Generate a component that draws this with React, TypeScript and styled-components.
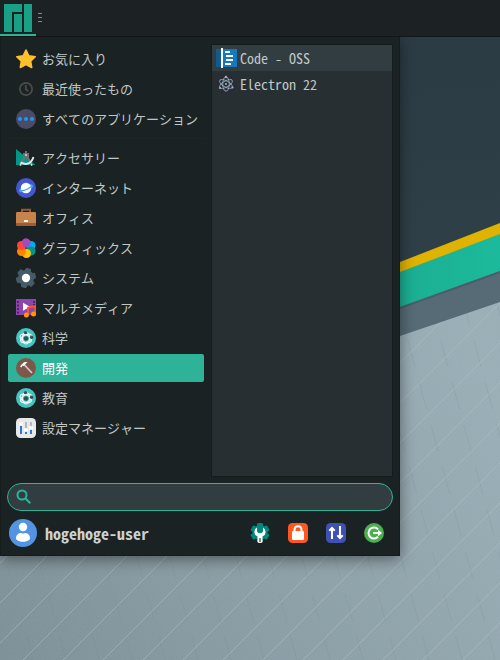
import React, { useState } from "react";
import styled, { createGlobalStyle } from "styled-components";

const GlobalStyle = createGlobalStyle`
  * { box-sizing: border-box; }
  html, body, #root { height: 100%; }
  body {
    margin: 0;
    overflow: hidden;
    color: #c0c8c5;
    font: 13px/20px "Noto Sans Mono CJK JP", "Liberation Mono", "Noto Sans CJK JP", monospace;
  }
  button, input { font: inherit; color: inherit; }
`;

const Desktop = styled.div`
  position: relative;
  min-height: 100%;
  display: flex;
  flex-direction: column;
  align-items: flex-start;
`;

const WallpaperArt = styled.svg`
  position: absolute;
  inset: 0;
  width: 100%;
  height: 100%;
`;

const Taskbar = styled.header`
  position: relative;
  z-index: 2;
  align-self: stretch;
  height: 37px;
  display: flex;
  align-items: flex-start;
  gap: 2px;
  background: #1c2224;
  border-bottom: 1px solid #111617;
`;

const StartButton = styled.button`
  width: 36px;
  height: 36px;
  padding: 4px 4px 2px;
  border: 0;
  border-bottom: 2px solid #2eb398;
  background: transparent;
  svg { display: block; }
`;

const Handle = styled.div`
  height: 35px;
  display: flex;
  flex-direction: column;
  justify-content: center;
  gap: 3px;
  span { width: 4px; height: 1px; background: #838a8b; }
`;

const Menu = styled.main`
  position: relative;
  width: 400px;
  max-width: 100%;
  display: flex;
  flex-direction: column;
  padding: 8px 6px 8px 7px;
  background: #1b2224;
  border: 1px solid #161b1c;
  border-top: 0;
  box-shadow: 0 3px 14px rgba(0, 0, 0, 0.45);
`;

const Columns = styled.div`
  display: flex;
  gap: 7px;
`;

const Categories = styled.nav`
  flex: 1;
  display: flex;
  flex-direction: column;
  gap: 2px;
`;

const CategoryButton = styled.button<{ $active: boolean }>`
  height: 28px;
  display: flex;
  align-items: center;
  gap: 6px;
  padding: 0 4px 0 8px;
  border: 0;
  border-radius: 2px;
  background: ${(p) => (p.$active ? "#2eb398" : "transparent")};
  color: ${(p) => (p.$active ? "#ffffff" : "inherit")};
  white-space: nowrap;
  text-align: left;
`;

const Separator = styled.hr`
  width: 100%;
  height: 1px;
  margin: 3px 0;
  border: 0;
  background: #1e2527;
`;

const AppList = styled.section`
  flex: 0 0 182px;
  height: 433px;
  margin-top: -1px;
  border: 1px solid #151a1b;
  background: #282f32;
`;

const AppButton = styled.button<{ $active: boolean }>`
  width: 100%;
  height: 26px;
  display: flex;
  align-items: center;
  gap: 3px;
  padding: 0 4px;
  border: 0;
  background: ${(p) => (p.$active ? "#323d42" : "transparent")};
  font-size: 14px;
  text-align: left;
`;

const SearchBox = styled.label`
  height: 28px;
  margin: 6px 0 0 -1px;
  display: flex;
  align-items: center;
  gap: 8px;
  padding: 0 8px;
  border: 1px solid #2eb398;
  border-radius: 14px;
  background: #323d42;
  input {
    flex: 1;
    min-width: 0;
    border: 0;
    outline: 0;
    background: transparent;
  }
`;

const Footer = styled.footer`
  display: flex;
  align-items: center;
  gap: 18px;
  margin-top: 8px;
  padding: 0 9px 0 1px;
`;

const UserButton = styled.button`
  flex: 1;
  display: flex;
  align-items: center;
  gap: 8px;
  padding: 0;
  border: 0;
  background: transparent;
  color: #cbd2d0;
  font-size: 16px;
  font-weight: 700;
`;

const ActionButton = styled.button`
  width: 20px;
  height: 20px;
  padding: 0;
  border: 0;
  background: transparent;
  svg { display: block; }
`;

type Children = { children: React.ReactNode };
const Icon = ({ children }: Children) => (
  <svg width="20" height="20" viewBox="0 0 20 20" aria-hidden="true">{children}</svg>
);

const Wallpaper = () => (
  <WallpaperArt viewBox="0 0 500 660" preserveAspectRatio="xMidYMid slice" aria-hidden="true">
    <defs>
      <linearGradient id="stone" x1="0" y1="660" x2="500" y2="400" gradientUnits="userSpaceOnUse">
        <stop offset="0" stopColor="#7e9097" />
        <stop offset="1" stopColor="#9cb0b8" />
      </linearGradient>
      <linearGradient id="teal" x1="400" x2="500" y1="0" y2="0" gradientUnits="userSpaceOnUse">
        <stop offset="0" stopColor="#1bae92" />
        <stop offset="1" stopColor="#1cba9c" />
      </linearGradient>
      <linearGradient id="shade" x1="0" y1="0" x2="0" y2="1">
        <stop offset="0" stopColor="#2b3b44" />
        <stop offset="1" stopColor="#32424b" />
      </linearGradient>
      <filter id="grain">
        <feTurbulence type="fractalNoise" baseFrequency="0.8" numOctaves="2" />
        <feColorMatrix values="0 0 0 0 0.3  0 0 0 0 0.4  0 0 0 0 0.44  0.7 0 0 0 -0.2" />
      </filter>
    </defs>
    <rect width="500" height="660" fill="url(#stone)" />
    <rect width="500" height="660" filter="url(#grain)" opacity="0.5" />
    {Array.from({ length: 22 }, (_, i) => (
      <path key={i} d={`M${i * 33 - 180} 0 l180 660`} stroke="#768991" strokeOpacity="0.2" strokeDasharray="28 16" />
    ))}
    {Array.from({ length: 28 }, (_, i) => (
      <path key={i} d={`M${i * 40 + 43} 0 l-660 660`} stroke="#b6c5c9" strokeOpacity="0.45" />
    ))}
    <path d="M0 0H500V302L400 336L0 472Z" fill="#566b76" />
    <path d="M0 0H500V271L400 307L0 451Z" fill="url(#teal)" />
    <path d="M0 0H500V234L400 272L0 424Z" fill="#dfb300" />
    <path d="M0 0H500V223L400 262L0 418Z" fill="url(#shade)" />
    <path d="M400 308L500 272" stroke="#354650" strokeOpacity="0.35" strokeWidth="2" />
  </WallpaperArt>
);

const Star = () => <Icon><path d="M10 1l2.8 5.8 6.4.9-4.6 4.5 1.1 6.3-5.7-3-5.7 3 1.1-6.3L.8 7.7l6.4-.9z" fill="#ffc02e" stroke="#ffc02e" strokeWidth="1.6" strokeLinejoin="round" /></Icon>;
const Clock = () => <Icon><g fill="none" stroke="#4a4a4a" strokeWidth="1.8"><circle cx="10" cy="10" r="6.1" /><path d="M9.8 6v4.3l2.5 2" /></g></Icon>;
const Dots = () => <Icon><circle cx="10" cy="10" r="10" fill="#494b67" /><g fill="#2196f3"><circle cx="4" cy="10" r="2" /><circle cx="10" cy="10" r="2" /><circle cx="16" cy="10" r="2" /></g></Icon>;
const Compass = () => (
  <Icon>
    <path d="M0 1L19.5 17H0z" fill="#009688" />
    <path d="M9 8L4.5 17.5M11 8l5 9.5" stroke="#737373" strokeWidth="1.8" fill="none" />
    <path d="M4.5 14.5Q14 19 17.5 9" stroke="#e5e9e8" strokeWidth="2" fill="none" />
    <path d="M9 3h2v2h2v4.5h-2L10 11 9 9.5H7V5h2z" fill="#707070" />
    <circle cx="10" cy="7" r="1" fill="#cfd8d6" />
    <path d="M4 17.6l1-2M16 17.6l-1-2" stroke="#d4d7d6" strokeWidth="1.4" />
  </Icon>
);
const Globe = () => (
  <Icon>
    <circle cx="10" cy="10" r="10" fill="#4457d0" />
    <ellipse cx="10" cy="10.3" rx="7.4" ry="3" transform="rotate(-23 10 10)" fill="#42a5f5" />
    <circle cx="10" cy="10" r="5.2" fill="#fff" />
    <path d="M3.5 13Q10 13 16 8" stroke="#42a5f5" strokeWidth="1.3" fill="none" />
  </Icon>
);
const Briefcase = () => <Icon><path d="M6 5V1.8h8V5" fill="none" stroke="#955a35" strokeWidth="2" /><rect y="4" width="20" height="13" rx="1.2" fill="#c7834e" /><path d="M0 15h20v2a1 1 0 0 1-1 1H1a1 1 0 0 1-1-1z" fill="#9e5c32" /><rect x="8" y="12" width="4" height="2" rx=".5" fill="#fff" /></Icon>;
const Flower = () => (
  <Icon>
    <circle cx="10" cy="5" r="4.5" fill="#ab47bc" />
    <circle cx="15" cy="7.5" r="4.5" fill="#03a9f4" />
    <circle cx="15" cy="13" r="4.5" fill="#009688" />
    <circle cx="10.5" cy="15.5" r="4.5" fill="#ffc107" />
    <circle cx="5.5" cy="13.5" r="4.5" fill="#ff8500" />
    <circle cx="5.5" cy="7.5" r="4.5" fill="#ff4438" />
    <path d="M10 10C5.5 8 5 3 8.3.8A4.5 4.5 0 0 1 14.5 5C14 8 12 9 10 10z" fill="#ab47bc" />
    <circle cx="10.2" cy="10" r="1.2" fill="#276a80" />
  </Icon>
);
const Gear = () => (
  <Icon>
    <g fill="#475b66">
      <circle cx="10" cy="10" r="8" />
      {[15, 75, 135, 195, 255, 315].map((angle) => <rect key={angle} x="7" y="0" width="6" height="6" rx="1.5" transform={`rotate(${angle} 10 10)`} />)}
    </g>
    <circle cx="10" cy="10" r="4.2" fill="#fff" />
  </Icon>
);
const Film = () => (
  <Icon>
    <path d="M0 1h20v16H0z" fill="#8e44ad" />
    <path d="M1 3h2v2H1zm0 3.5h2v2H1zM1 10h2v2H1zm0 3.5h2v2H1zM17 3h2v2h-2zm0 3h2v2h-2z" fill="#4e2861" />
    <path d="M7 4.8v8l7-4z" fill="#fff" />
    <path d="M12 17V9.5l7.2-1.4V16" fill="none" stroke="#ff5722" strokeWidth="1.8" />
    <circle cx="10.4" cy="17" r="2.5" fill="#ff9800" /><circle cx="17.5" cy="16" r="2.5" fill="#ff9800" />
  </Icon>
);
const Atom = () => (
  <Icon>
    <circle cx="10" cy="10" r="10" fill="#45c5bf" />
    <g fill="none" stroke="#edfafa" strokeWidth="1.1">
      <ellipse cx="10" cy="10.5" rx="6.2" ry="3.6" transform="rotate(28 10 10)" />
      <ellipse cx="10" cy="10.5" rx="6.2" ry="3.6" transform="rotate(-28 10 10)" />
      <ellipse cx="10" cy="10" rx="3.6" ry="6" />
    </g>
    <g fill="#3e4b53"><circle cx="10" cy="10.5" r="2.2" /><circle cx="9.5" cy="4.6" r="1.7" /><circle cx="15.6" cy="9.2" r="1.7" /></g>
  </Icon>
);
const Hammer = () => <Icon><circle cx="10" cy="10" r="10" fill="#7d574a" /><path d="M8 6.5l8 8.5" stroke="#d5c9c4" strokeWidth="1.8" /><path d="M4 8.3l4-4 3.6-.2-3 2.8-.7 1-1.3-.3-1.2 1.8z" fill="#fff" /></Icon>;
const Sliders = () => (
  <Icon>
    <rect width="20" height="20" rx="4.5" fill="#e7e8e9" />
    <path d="M5 4v12M10 4v12M15 4v12" stroke="#b4b7bc" strokeWidth="2" />
    <path d="M5 7v9M10 13v3M15 11v5" stroke="#277bd8" strokeWidth="2" />
    <g fill="#fff"><circle cx="5" cy="6" r="2.1" /><circle cx="10" cy="12" r="2.1" /><circle cx="15" cy="10" r="2.1" /></g>
  </Icon>
);

const CodeIcon = () => (
  <svg width="21" height="20" viewBox="0 0 21 20" aria-hidden="true">
    <path d="M0 1h21v18H0z" fill="#1679be" /><path d="M0 1h5v18H0z" fill="#125b91" />
    <path d="M5 0h2v20H5z" fill="#fff" />
    <path d="M9 4h5M10 8h7M10 12h7M9 16h6" stroke="#fff" strokeWidth="2" />
  </svg>
);
const ElectronIcon = () => (
  <svg width="21" height="20" viewBox="0 0 21 20" aria-hidden="true">
    <circle cx="10" cy="10" r="9.5" fill="#2b2b38" />
    <g fill="none" stroke="#90a5b2" strokeWidth="1">
      <ellipse cx="10" cy="10" rx="7.1" ry="3" transform="rotate(30 10 10)" />
      <ellipse cx="10" cy="10" rx="7.1" ry="3" transform="rotate(-30 10 10)" />
      <ellipse cx="10" cy="10" rx="3.3" ry="7.2" />
    </g>
    <g fill="#a1b4be"><circle cx="10" cy="10" r="1" /><circle cx="10" cy="3" r="1.2" /><circle cx="4" cy="14" r="1.1" /><circle cx="16.5" cy="13.5" r="1.1" /></g>
  </svg>
);

const categoryGroups = [
  [
    { name: "お気に入り", icon: Star },
    { name: "最近使ったもの", icon: Clock },
    { name: "すべてのアプリケーション", icon: Dots },
  ],
  [
    { name: "アクセサリー", icon: Compass },
    { name: "インターネット", icon: Globe },
    { name: "オフィス", icon: Briefcase },
    { name: "グラフィックス", icon: Flower },
    { name: "システム", icon: Gear },
    { name: "マルチメディア", icon: Film },
    { name: "科学", icon: Atom },
    { name: "開発", icon: Hammer },
    { name: "教育", icon: Atom },
    { name: "設定マネージャー", icon: Sliders },
  ],
];

export default function App() {
  const [category, setCategory] = useState("開発");
  const [query, setQuery] = useState("");

  const renderCategory = ({ name, icon: CategoryIcon }: { name: string; icon: React.FC }) => (
    <CategoryButton key={name} $active={category === name} onClick={() => setCategory(name)}>
      <CategoryIcon />{name}
    </CategoryButton>
  );

  return (
    <Desktop>
      <GlobalStyle />
      <Wallpaper />
      <Taskbar>
        <StartButton aria-label="メニュー">
          <svg width="28" height="28" viewBox="0 0 28 28" aria-hidden="true">
            <path d="M0 0h18v8H8v20H0zM10 10h8v18h-8zM20 0h8v28h-8z" fill="#19a187" />
          </svg>
        </StartButton>
        <Handle><span /><span /><span /></Handle>
      </Taskbar>
      <Menu>
        <Columns>
          <Categories>
            {categoryGroups[0].map(renderCategory)}
            <Separator />
            {categoryGroups[1].map(renderCategory)}
          </Categories>
          <AppList>
            <AppButton $active><CodeIcon />Code - OSS</AppButton>
            <AppButton $active={false}><ElectronIcon />Electron 22</AppButton>
          </AppList>
        </Columns>
        <SearchBox>
          <svg width="16" height="16" viewBox="0 0 16 16" aria-hidden="true">
            <g fill="none" stroke="#2eb398" strokeWidth="2"><circle cx="6" cy="6" r="4.5" /><path d="M9.3 9.3l5 5" /></g>
          </svg>
          <input aria-label="検索" value={query} onChange={(e) => setQuery(e.target.value)} />
        </SearchBox>
        <Footer>
          <UserButton>
            <svg width="28" height="28" viewBox="0 0 28 28" aria-hidden="true">
              <circle cx="14" cy="14" r="14" fill="#5294e2" />
              <circle cx="14" cy="8" r="4.2" fill="#fff" />
              <path d="M7 19c0-3 2.5-5 5-5 1.2.8 2.8.8 4 0 2.5 0 5 2 5 5 0 5-14 5-14 0z" fill="#fff" />
            </svg>
            hogehoge-user
          </UserButton>
          <ActionButton aria-label="設定">
            <Icon>
              <g fill="#00897b"><circle cx="10" cy="9.5" r="7.5" />{[0, 60, 120, 180, 240, 300].map((angle) => <rect key={angle} x="7" y="0" width="6" height="6" rx="1.3" transform={`rotate(${angle} 10 9.5)`} />)}</g>
              <path d="M7 4.5A5 5 0 0 0 7.5 13.5V19q0 1 2.5 1t2.5-1v-5.5A5 5 0 0 0 13 4.5V8q0 2-3 2T7 8z" fill="#fff" />
              <path d="M9 15h2v4H9z" fill="#888" />
            </Icon>
          </ActionButton>
          <ActionButton aria-label="画面をロック">
            <Icon><rect width="20" height="20" rx="4.5" fill="#ff5722" /><path d="M6.5 9V7c0-5 7-5 7 0v2" fill="none" stroke="#fff" strokeWidth="2" /><rect x="4" y="8" width="12" height="9" rx="1" fill="#fff" /></Icon>
          </ActionButton>
          <ActionButton aria-label="ユーザーを切り替え">
            <Icon><rect width="20" height="20" rx="4.5" fill="#3f51b5" /><g fill="none" stroke="#fff" strokeWidth="2"><path d="M6 16V5M3.3 7.7L6 5l2.7 2.7M14 3v12M11.3 12.3L14 15l2.7-2.7" /></g></Icon>
          </ActionButton>
          <ActionButton aria-label="ログアウト">
            <Icon><circle cx="10" cy="10" r="10" fill="#4caf50" /><path d="M14 6.2A5.5 5.5 0 1 0 14 13.8M9 10h6" fill="none" stroke="#fff" strokeWidth="2" /><path d="M14 6.8l4 3.2-4 3.2z" fill="#fff" /></Icon>
          </ActionButton>
        </Footer>
      </Menu>
    </Desktop>
  );
}
